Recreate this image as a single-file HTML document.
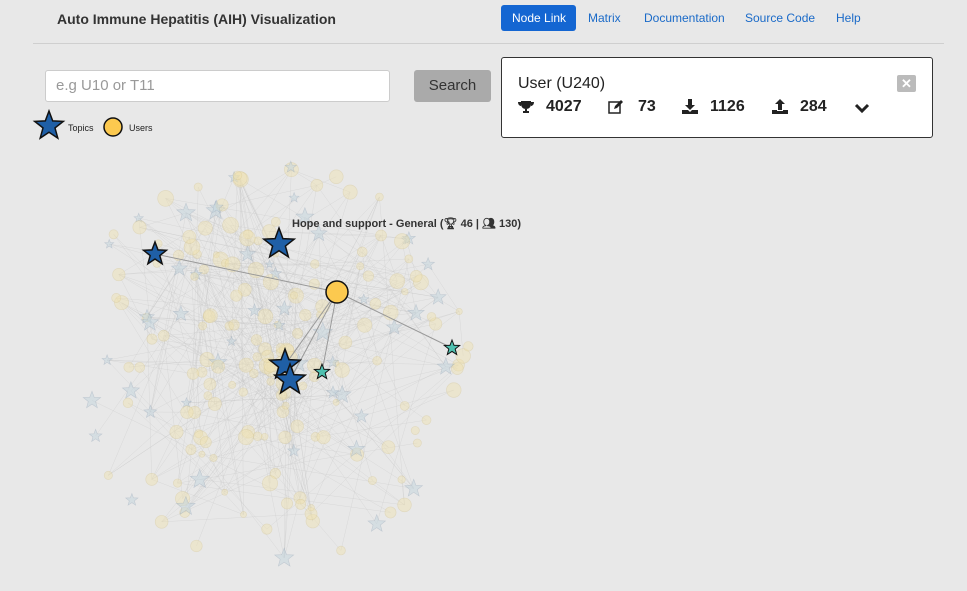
<!DOCTYPE html>
<html><head><meta charset="utf-8"><style>
body{margin:0;width:967px;height:591px;background:#e8e8e8;font-family:"Liberation Sans",sans-serif;position:relative;overflow:hidden}
.t{position:absolute;left:57px;top:11px;font-size:14px;font-weight:bold;color:#333}
.hr{position:absolute;left:33px;top:43px;width:911px;height:1px;background:#cfcfcf}
.nav{position:absolute;top:5px;height:26px;line-height:26px;font-size:12px;color:#1a6ac8}
.nb{background:#1466d2;color:#fff;border-radius:3px;padding:0 10px 0 11px}
.inp{position:absolute;left:45px;top:70px;border:1px solid #ccc;border-radius:3px;background:#fff;font-size:15px;color:#999;line-height:30px;box-sizing:border-box;padding-left:10px;width:345px;height:32px}
.btn{position:absolute;left:414px;top:70px;width:77px;height:32px;background:#aaa;border-radius:3px;color:#333;font-size:15px;text-align:center;line-height:32px}
.card{position:absolute;left:501px;top:57px;width:430px;height:79px;border:1px solid #333;border-radius:3px;background:#fff}
.ct{position:absolute;left:16px;top:17px;font-size:16px;color:#222}
.x{position:absolute;right:16px;top:17px;width:19px;height:17px;background:#bbb;border-radius:2px;color:#fff;font-size:13px;text-align:center;line-height:17px;font-weight:bold}
.st{position:absolute;top:40px;font-size:16px;font-weight:bold;color:#222}
.lg{position:absolute;font-size:9px;color:#222}
</style></head><body>
<div class="t">Auto Immune Hepatitis (AIH) Visualization</div>
<div class="nav nb" style="left:501px">Node Link</div>
<div class="nav" style="left:588px">Matrix</div>
<div class="nav" style="left:644px">Documentation</div>
<div class="nav" style="left:745px">Source Code</div>
<div class="nav" style="left:836px">Help</div>
<div class="hr"></div>
<div class="inp">e.g U10 or T11</div>
<div class="btn">Search</div>
<svg style="position:absolute;left:0;top:0" width="967" height="591" id="g"></svg>
<div class="card">
<div class="ct">User (U240)</div><div class="x">✕</div>
<svg style="position:absolute;left:16px;top:42px" width="16" height="14" viewBox="0 0 16 14"><path d="M3 1h10v3c0 3-2 5-5 5s-5-2-5-5zM3 2H0c0 3 2 4 3 4M13 2h3c0 3-2 4-3 4M7 9h2v2h2v2H5v-2h2z" fill="#222"/></svg>
<div class="st" style="left:44px">4027</div>
<svg style="position:absolute;left:106px;top:42px" width="16" height="14" viewBox="0 0 16 14"><rect x="1" y="2" width="11" height="11" fill="none" stroke="#222" stroke-width="1.5"/><path d="M6 9l1-3 6-6 2 2-6 6z" fill="#222"/></svg>
<div class="st" style="left:136px">73</div>
<svg style="position:absolute;left:180px;top:41px" width="16" height="15" viewBox="0 0 16 15"><path d="M6 0h4v6h3l-5 5-5-5h3zM0 11h6l2 2 2-2h6v4H0z" fill="#222"/></svg>
<div class="st" style="left:208px">1126</div>
<svg style="position:absolute;left:270px;top:41px" width="16" height="15" viewBox="0 0 16 15"><path d="M6 11h4V5h3L8 0 3 5h3zM0 11h5v1h6v-1h5v4H0z" fill="#222"/></svg>
<div class="st" style="left:298px">284</div>
<svg style="position:absolute;left:352px;top:45px" width="16" height="11" viewBox="0 0 16 11"><path d="M2 2l6 6 6-6" fill="none" stroke="#222" stroke-width="3"/></svg>
</div>
<div class="lg" style="left:68px;top:123px">Topics</div>
<div class="lg" style="left:129px;top:123px">Users</div>
<div style="position:absolute;left:292px;top:217px;font-size:11px;font-weight:bold;color:#333">Hope and support - General (🏆︎ 46 | 👥︎ 130)</div>
<script>
var g=document.getElementById('g'),h='';
function star(x,y,r,f,s,sw,o){var p=[];for(var i=0;i<10;i++){var a=-Math.PI/2+i*Math.PI/5,rr=i%2?r*0.42:r;p.push((x+rr*Math.cos(a)).toFixed(1)+','+(y+rr*Math.sin(a)).toFixed(1));}
return '<polygon points="'+p.join(' ')+'" fill="'+f+'" stroke="'+s+'" stroke-width="'+sw+'" opacity="'+o+'"/>';}
var seed=7;function R(){seed=(seed*16807)%2147483647;return seed/2147483647;}
var cx=265,cy=365,nodes=[];
for(var i=0;i<220;i++){var a=R()*6.283,d=Math.pow(R(),0.7)*205;nodes.push([cx+Math.cos(a)*d,cy+Math.sin(a)*d*1.0]);}
for(var i=0;i<350;i++){var a=nodes[Math.floor(R()*nodes.length)],b=nodes[Math.floor(R()*nodes.length)];h+='<line x1="'+a[0]+'" y1="'+a[1]+'" x2="'+b[0]+'" y2="'+b[1]+'" stroke="#c4c4c4" stroke-width="0.5" opacity="0.45"/>';}
for(var i=0;i<nodes.length;i++){var n=nodes[i];if(R()<0.78)h+='<circle cx="'+n[0]+'" cy="'+n[1]+'" r="'+(3+R()*5)+'" fill="#f0e2b0" stroke="#d8c890" stroke-width="0.7" opacity="0.45"/>';else h+=star(n[0],n[1],4+R()*6,'#c3d5de','#9ab','0.6','0.5');}
h+='<line x1="155" y1="254" x2="337" y2="292" stroke="#999" stroke-width="1"/><line x1="337" y1="292" x2="452" y2="348" stroke="#999"/><line x1="337" y1="292" x2="322" y2="372" stroke="#999"/><line x1="337" y1="292" x2="285" y2="365" stroke="#999"/><line x1="337" y1="292" x2="290" y2="380" stroke="#999"/>';
h+=star(279,244,16,'#1f5fa6','#111','1.5',1)+star(155,254,12,'#1f5fa6','#111','1.5',1)+star(285,365,16,'#1f5fa6','#111','1.5',1)+star(290,380,16,'#1f5fa6','#111','1.5',1)+star(452,348,8,'#4fc0b0','#111','1',1)+star(322,372,8,'#4fc0b0','#111','1',1);
h+='<circle cx="337" cy="292" r="11" fill="#fcc94f" stroke="#111" stroke-width="1.5"/>';
h+=star(49,126,15,'#1f5fa6','#111','1.5',1)+'<circle cx="113" cy="127" r="9" fill="#fcc94f" stroke="#111" stroke-width="1.5"/>';
g.innerHTML=h;
</script>
</body></html>
